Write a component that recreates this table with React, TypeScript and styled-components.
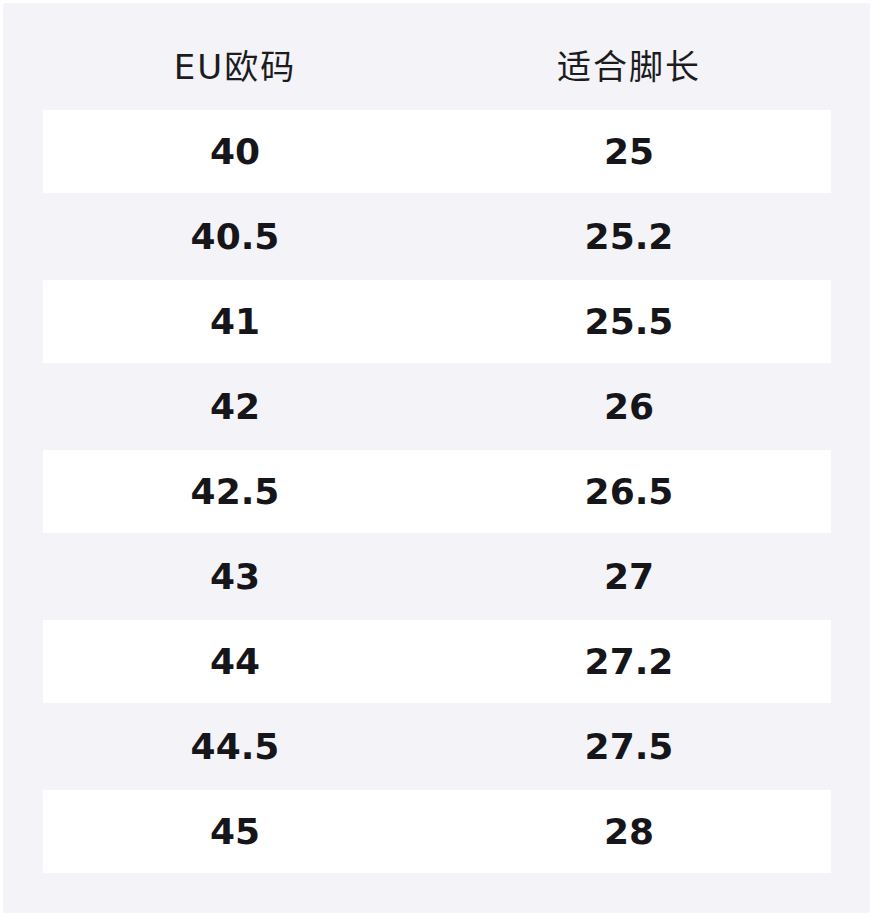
import React from "react";
import styled, { createGlobalStyle } from "styled-components";

const GlobalStyle = createGlobalStyle`
  html, body {
    margin: 0;
    padding: 0;
    background: #ffffff;
  }
  body {
    font-family: "DejaVu Sans", "Noto Sans CJK SC", sans-serif;
  }
`;

const Page = styled.div`
  padding: 3px 4px 5px 3px;
`;

const Card = styled.div`
  background: #f3f3f8;
  border-radius: 3px;
  padding: 0 39px 40px 40px;
  display: flex;
  flex-direction: column;
`;

const Row = styled.div<{ $white?: boolean; $height: number }>`
  display: grid;
  grid-template-columns: 384px 1fr;
  height: ${(p) => p.$height}px;
  align-items: center;
  background: ${(p) => (p.$white ? "#ffffff" : "transparent")};
`;

const HeadCell = styled.div`
  text-align: center;
  font-family: "DejaVu Sans", "Noto Sans CJK SC", sans-serif;
  font-size: 34px;
  font-weight: 400;
  letter-spacing: 2px;
  color: #1c1c1f;
  padding-top: 16px;
`;

const Cell = styled.div`
  text-align: center;
  font-family: "DejaVu Sans", sans-serif;
  font-size: 36px;
  font-weight: 700;
  color: #16161a;
`;

const data: [string, string][] = [
  ["40", "25"],
  ["40.5", "25.2"],
  ["41", "25.5"],
  ["42", "26"],
  ["42.5", "26.5"],
  ["43", "27"],
  ["44", "27.2"],
  ["44.5", "27.5"],
  ["45", "28"],
];

export default function App() {
  return (
    <>
      <GlobalStyle />
      <Page>
        <Card>
          <Row $height={107}>
            <HeadCell>EU欧码</HeadCell>
            <HeadCell>适合脚长</HeadCell>
          </Row>
          {data.map(([eu, len], i) => (
            <Row key={eu} $white={i % 2 === 0} $height={i % 2 === 0 ? 83 : 87}>
              <Cell>{eu}</Cell>
              <Cell>{len}</Cell>
            </Row>
          ))}
        </Card>
      </Page>
    </>
  );
}
